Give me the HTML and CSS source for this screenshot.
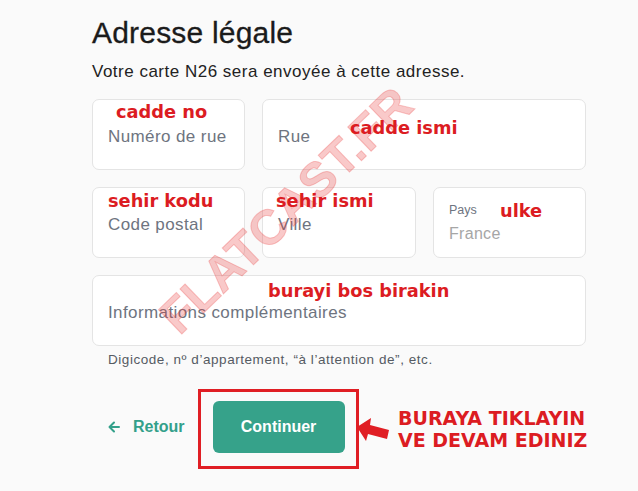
FILE: index.html
```html
<!DOCTYPE html>
<html lang="fr">
<head>
<meta charset="utf-8">
<title>Adresse légale</title>
<link rel="stylesheet" href="styles.css">
</head>
<body>
<main class="page">
  <h1 class="title">Adresse légale</h1>
  <p class="subtitle">Votre carte N26 sera envoyée à cette adresse.</p>

  <div class="grid">
    <div class="field"><span class="ph">Numéro de rue</span></div>
    <div class="field span2"><span class="ph">Rue</span></div>
    <div class="field"><span class="ph">Code postal</span></div>
    <div class="field"><span class="ph">Ville</span></div>
    <div class="field field-select">
      <span class="small-label">Pays</span>
      <span class="value-muted">France</span>
    </div>
    <div class="field span3"><span class="ph">Informations complémentaires</span></div>
  </div>
  <p class="hint">Digicode, nº d’appartement, “à l’attention de”, etc.</p>

  <div class="actions">
    <a class="back" href="#">
      <svg class="back-arrow" width="12" height="12" viewBox="0 0 12 12"><path d="M11 6H1.5M6 1.5L1.5 6L6 10.5" fill="none" stroke="#33a08a" stroke-width="2" stroke-linecap="round" stroke-linejoin="round"/></svg>
      Retour
    </a>
    <button class="continue" type="button">Continuer</button>
  </div>

  <!-- overlay annotations -->
  <div class="watermark">FLATCAST.FR</div>
  <span class="note note-1">cadde no</span>
  <span class="note note-2">cadde ismi</span>
  <span class="note note-3">sehir kodu</span>
  <span class="note note-4">sehir ismi</span>
  <span class="note note-5">ulke</span>
  <span class="note note-6">burayi bos birakin</span>
  <div class="highlight"></div>
  <svg class="red-arrow" width="34" height="24" viewBox="0 0 34 24">
    <polygon points="0,9 14,0 13,7 32,12 30,21 11,16 9,23" fill="#e01e24"/>
  </svg>
  <div class="cta-note">BURAYA TIKLAYIN<br>VE DEVAM EDINIZ</div>
</main>
</body>
</html>
```

FILE: styles.css
```css
html, body {
  margin: 0;
  padding: 0;
  background: #fafafa;
}
body {
  width: 638px;
  height: 491px;
  overflow: hidden;
  font-family: "Liberation Sans", Arial, sans-serif;
}
.page {
  position: relative;
  width: 494px;
  padding: 15px 0 0 92px;
}
.title {
  margin: 0;
  font-size: 30px;
  font-weight: 400;
  color: #1b1b1b;
  line-height: 36px;
  letter-spacing: 0.2px;
  -webkit-text-stroke: 0.3px #1b1b1b;
}
.subtitle {
  margin: 11px 0 0;
  font-size: 17px;
  line-height: 20px;
  color: #222;
  letter-spacing: 0.5px;
}
.grid {
  margin-top: 17px;
  display: grid;
  grid-template-columns: 153px 154px 153px;
  column-gap: 17px;
  row-gap: 17px;
  grid-auto-rows: 71px;
}
.field {
  box-sizing: border-box;
  background: #fff;
  border: 1px solid #e4e4e4;
  border-radius: 7px;
  display: flex;
  flex-direction: column;
  justify-content: center;
  padding: 4px 15px 0;
}
.span2 { grid-column: span 2; }
.span3 { grid-column: span 3; }
.ph {
  font-size: 17px;
  color: #6e7480;
  line-height: 20px;
  letter-spacing: 0.4px;
}
.field-select {
  padding-top: 2px;
  gap: 8px;
}
.small-label {
  font-size: 12.5px;
  color: #6e7480;
  line-height: 14px;
  margin-top: -2px;
}
.value-muted {
  font-size: 16px;
  color: #a6a6a6;
  line-height: 18px;
  letter-spacing: 0.3px;
}
.hint {
  margin: 6px 0 0 16px;
  font-size: 13.5px;
  color: #555b63;
  line-height: 16px;
  letter-spacing: 0.55px;
}
.actions {
  margin-top: 33px;
  display: flex;
  align-items: center;
  gap: 28px;
  padding-left: 16px;
}
.back {
  color: #33a08a;
  font-size: 16px;
  font-weight: 700;
  text-decoration: none;
  display: flex;
  align-items: center;
}
.back-arrow {
  margin-right: 13px;
}
.continue {
  width: 132px;
  height: 52px;
  border: none;
  border-radius: 6px;
  background: #36a28a;
  color: #fff;
  font-family: "Liberation Sans", Arial, sans-serif;
  font-weight: 700;
  font-size: 16px;
}
.watermark {
  position: absolute;
  left: 168px;
  top: 300px;
  font-family: "Liberation Sans", Arial, sans-serif;
  font-weight: 700;
  font-size: 49px;
  line-height: 49px;
  color: rgba(232, 60, 60, 0.28);
  -webkit-text-stroke: 1px rgba(232, 60, 60, 0.28);
  white-space: nowrap;
  transform: rotate(-44deg);
  transform-origin: 0 50%;
  pointer-events: none;
}
.note {
  position: absolute;
  font-family: "DejaVu Sans", Verdana, sans-serif;
  font-weight: 700;
  font-size: 17.8px;
  color: #dc1c22;
  line-height: 20px;
  white-space: nowrap;
}
.note-1 { left: 116px; top: 102px; }
.note-2 { left: 350px; top: 118px; }
.note-3 { left: 108px; top: 191px; }
.note-4 { left: 276px; top: 191px; }
.note-5 { left: 500px; top: 201px; }
.note-6 { left: 268px; top: 281px; }
.highlight {
  position: absolute;
  left: 198px;
  top: 389px;
  width: 161px;
  height: 80px;
  box-sizing: border-box;
  border: 3px solid #e01e24;
}
.red-arrow {
  position: absolute;
  left: 357px;
  top: 418px;
}
.cta-note {
  position: absolute;
  left: 398px;
  top: 407px;
  font-family: "DejaVu Sans", Verdana, sans-serif;
  font-weight: 700;
  font-size: 19px;
  line-height: 22px;
  color: #dc1c22;
  white-space: nowrap;
}
```
